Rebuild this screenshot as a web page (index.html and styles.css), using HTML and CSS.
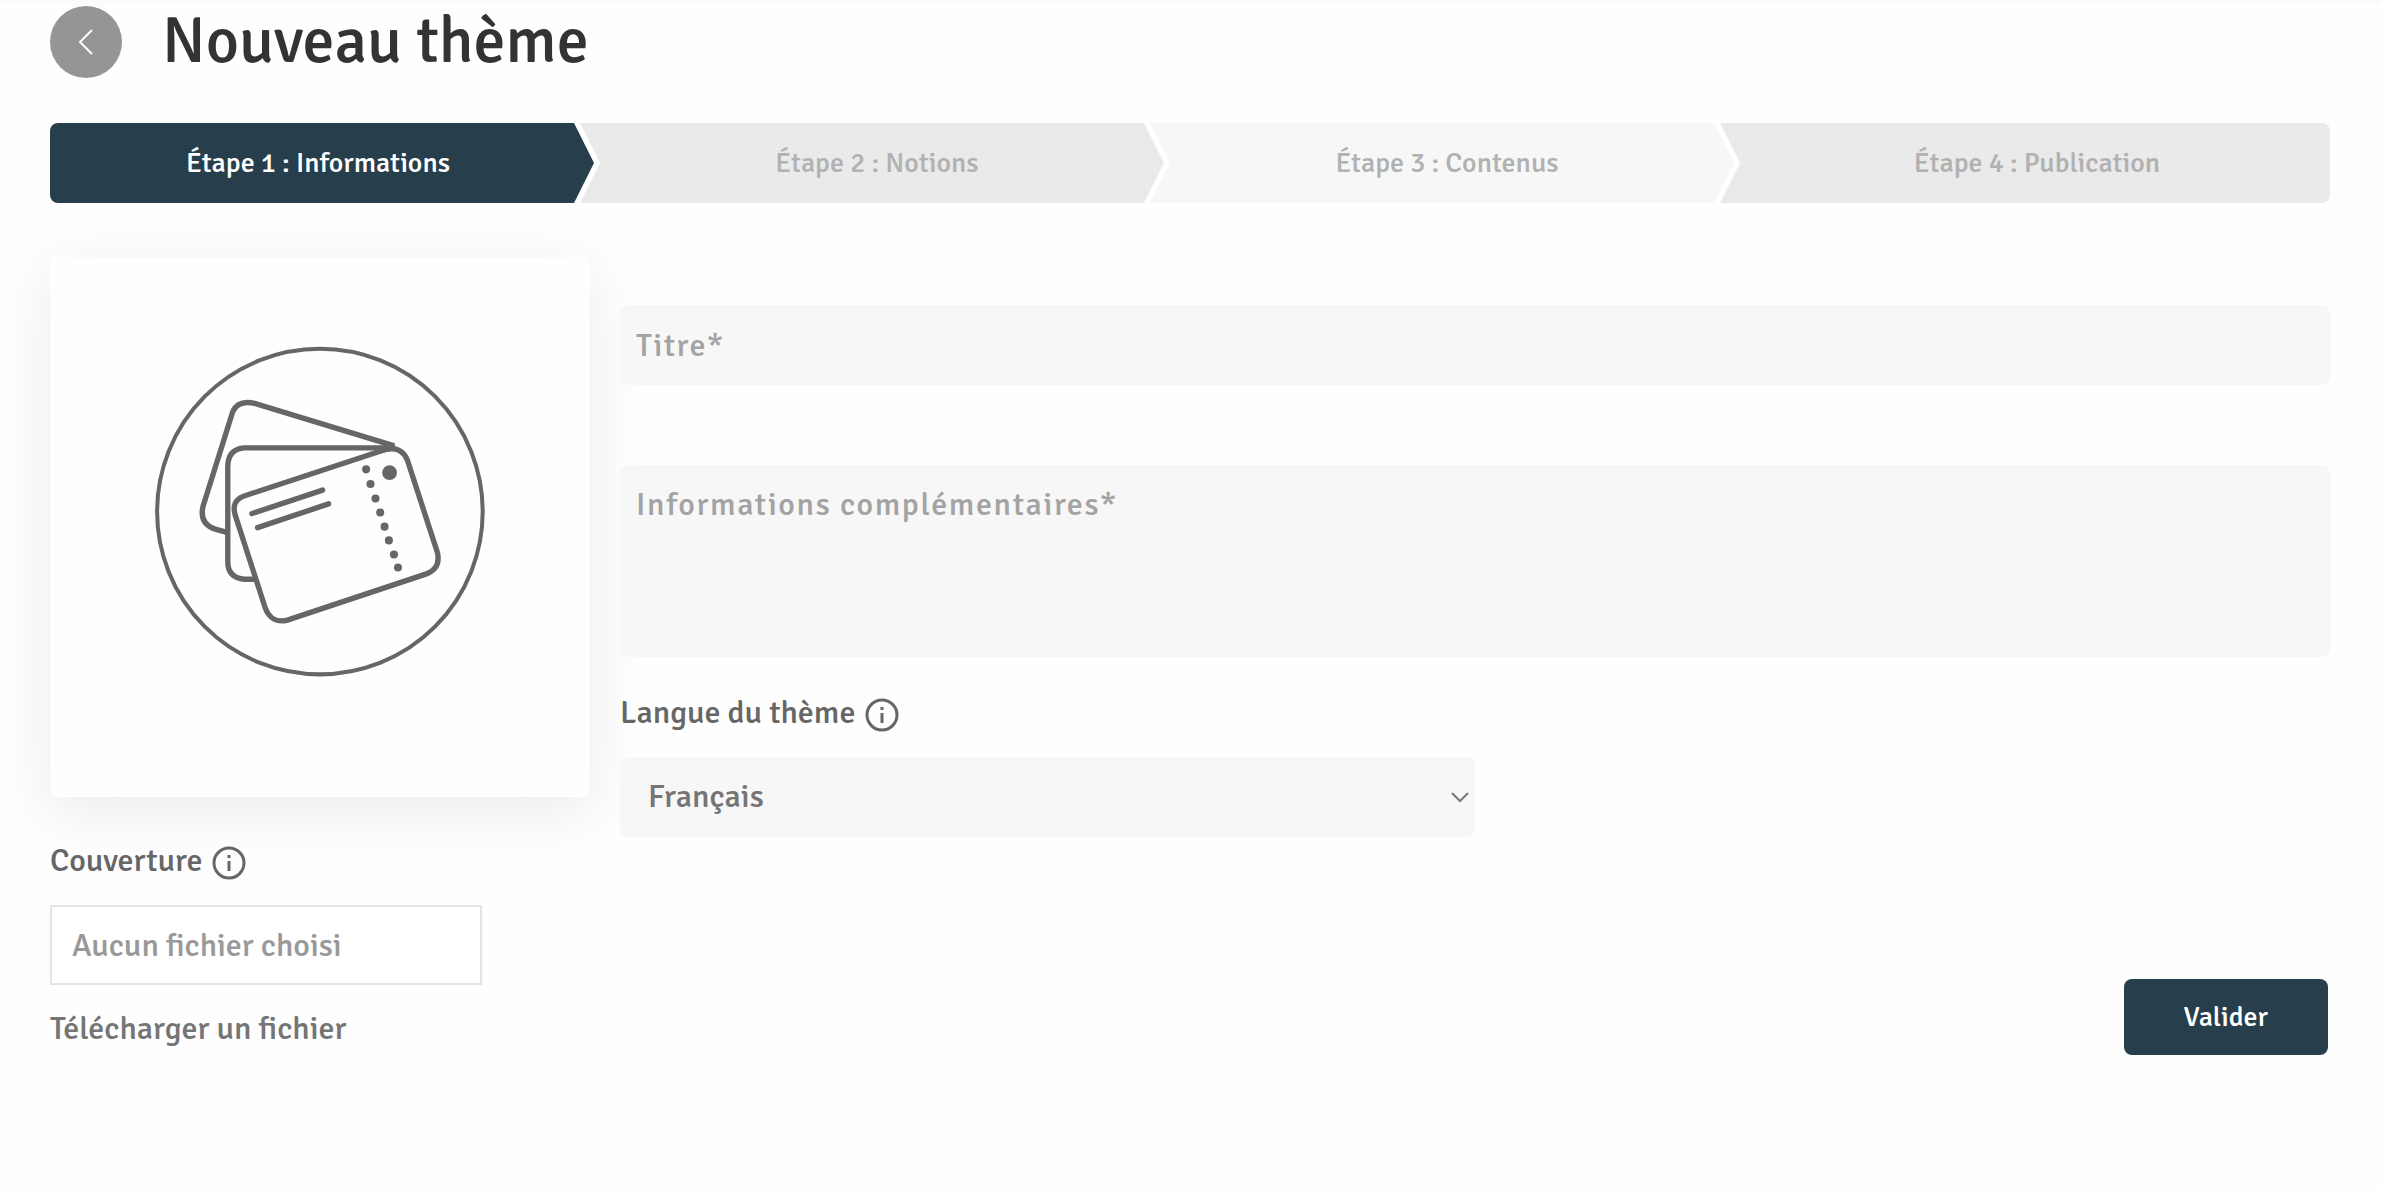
FILE: index.html
```html
<!DOCTYPE html>
<html lang="fr">

<head>
  <meta charset="utf-8">
  <meta name="viewport" content="width=device-width, initial-scale=1">
  <title>Nouveau thème</title>
  <link rel="stylesheet" href="styles.css">
</head>

<body>

  <!-- Header -->
  <header class="page-header">
    <button type="button" class="btn-back" aria-label="Retour">
      <svg width="16" height="26" viewBox="0 0 16 26" fill="none" stroke="#fff" stroke-width="2">
        <path d="M14 1 L2 13 L14 25" />
      </svg>
    </button>
    <h1 class="page-title">Nouveau thème</h1>
  </header>

  <!-- Steps -->
  <ol class="steps">
    <li class="step step-active">Étape 1 : Informations</li>
    <li class="step">Étape 2 : Notions</li>
    <li class="step step-light">Étape 3 : Contenus</li>
    <li class="step">Étape 4 : Publication</li>
  </ol>

  <form class="theme-form">

    <!-- Cover -->
    <div class="cover-col">
      <div class="cover-card">
        <svg class="cover-img" viewBox="0 0 1080 1080" fill="none" stroke="#666" stroke-width="16">
          <circle cx="540" cy="542" r="486" stroke-width="12" />
          <path d="M262 604 L223 593 Q180 575 191 527 L280 243 Q297 208 345 219 L762 346" />
          <path d="M350 744 H315 Q265 740 265 692 V405 Q267 355 315 352 H765" />
          <path d="M318 494 L722 361 C765 345 790 360 801 388 L891 665 C898 698 885 718 858 728 L443 866 C412 874 388 860 377 830 L287 552 C278 520 290 503 318 494 Z" />
          <path d="M337 548 L548 478 M354 590 L566 519" stroke-linecap="round" />
          <g fill="#666" stroke="none">
            <circle cx="748" cy="426" r="22" />
            <circle cx="678" cy="416" r="12" />
            <circle cx="691" cy="460" r="12" />
            <circle cx="706" cy="503" r="12" />
            <circle cx="720" cy="545" r="12" />
            <circle cx="733" cy="587" r="12" />
            <circle cx="746" cy="628" r="12" />
            <circle cx="761" cy="670" r="12" />
            <circle cx="773" cy="709" r="12" />
          </g>
        </svg>
      </div>
      <div class="label-row">
        <label for="couverture">Couverture</label>
        <svg class="info-icon" viewBox="0 0 34 34" fill="none" stroke="#666" stroke-width="3">
          <circle cx="17" cy="17" r="15" />
          <path d="M17 15 V25 M17 9 V12" />
        </svg>
      </div>
      <input type="text" id="couverture" class="file-name" placeholder="Aucun fichier choisi" readonly>
      <a href="#" class="upload-link">Télécharger un fichier</a>
    </div>

    <!-- Fields -->
    <div class="fields-col">
      <input type="text" class="field field-title" placeholder="Titre*" aria-label="Titre">
      <textarea class="field field-infos" placeholder="Informations complémentaires*"
        aria-label="Informations complémentaires"></textarea>
      <div class="label-row">
        <label for="langue">Langue du thème</label>
        <svg class="info-icon" viewBox="0 0 34 34" fill="none" stroke="#666" stroke-width="3">
          <circle cx="17" cy="17" r="15" />
          <path d="M17 15 V25 M17 9 V12" />
        </svg>
      </div>
      <div class="select-wrap">
        <select id="langue" class="field-select">
          <option>Français</option>
        </select>
        <svg class="select-arrow" viewBox="0 0 18 11" fill="none" stroke="#777" stroke-width="2">
          <path d="M1 1 L9 9 L17 1" />
        </svg>
      </div>
      <button type="submit" class="btn-submit">Valider</button>
    </div>

  </form>

</body>

</html>
```

FILE: styles.css
```css
* {
  box-sizing: border-box;
}

body {
  margin: 0;
  padding: 6px 52px 0 50px;
  background-color: #fefefe;
  box-shadow: inset 0 8px 8px -8px rgba(0, 0, 0, 0.04);
  color: #666;
  font-family: "Signika Negative", Lato, "Open Sans", sans-serif;
  font-size: 32px;
  font-weight: 500;
  line-height: 40px;
}

input,
textarea,
select,
button {
  font: inherit;
}

/* Header */
.page-header {
  display: flex;
  align-items: center;
  gap: 40px;
  height: 72px;
}

.btn-back {
  display: flex;
  align-items: center;
  justify-content: center;
  width: 72px;
  height: 72px;
  padding: 0;
  border: none;
  border-radius: 50%;
  background-color: #979497;
}

.page-title {
  margin: 0;
  color: #333;
  font-size: 64px;
  font-weight: 500;
  line-height: 72px;
}

/* Steps */
.steps {
  display: grid;
  grid-template-columns: 530fr 570fr 570fr 610fr;
  margin: 45px 0 54px;
  padding: 0;
  overflow: hidden;
  border-radius: 8px;
  list-style: none;
}

.step {
  position: relative;
  padding: 20px 0 20px 24px;
  background-color: #eaeaea;
  color: #b1b1b1;
  font-size: 28px;
  text-align: center;
}

.step-active {
  padding-left: 6px;
  background-color: #273e4c;
  color: #fff;
}

.step-light {
  background-color: #f7f7f7;
}

.step:nth-child(1) {
  z-index: 3;
}

.step:nth-child(2) {
  z-index: 2;
}

.step:nth-child(3) {
  z-index: 1;
}

/* White chevron, then the arrow head over it */
.step:not(:last-child)::before,
.step:not(:last-child)::after {
  content: "";
  position: absolute;
  top: 0;
  left: calc(100% - 6px);
  height: 100%;
}

.step:not(:last-child)::before {
  width: 26px;
  background-color: #fff;
  clip-path: polygon(0 0, 6px 0, 100% 50%, 6px 100%, 0 100%);
}

.step:not(:last-child)::after {
  width: 20px;
  background-color: inherit;
  clip-path: polygon(0 0, 100% 50%, 0 100%);
}

/* Form */
.theme-form {
  display: grid;
  grid-template-columns: 1fr 3fr;
}

.cover-col {
  display: flex;
  flex-direction: column;
  align-items: flex-start;
  padding-right: 30px;
}

.cover-card {
  display: flex;
  justify-content: center;
  align-items: flex-start;
  width: 100%;
  aspect-ratio: 1;
  padding-top: 73px;
  border-radius: 8px;
  background-color: #fefefe;
  box-shadow: 0 14px 60px rgba(0, 0, 0, 0.08);
}

.cover-img {
  width: 67%;
}

.label-row {
  display: flex;
  align-items: center;
  gap: 10px;
}

.info-icon {
  width: 34px;
  height: 34px;
  margin-top: 4px;
}

.cover-col .label-row {
  margin: 44px 0 24px;
}

.file-name {
  width: 80%;
  height: 80px;
  padding: 0 20px;
  border: 2px solid #e4e4e4;
  background-color: #fff;
}

.file-name::placeholder {
  color: #999;
  opacity: 1;
}

.upload-link {
  margin-top: 24px;
  color: #757575;
  text-decoration: none;
}

.fields-col {
  display: flex;
  flex-direction: column;
  align-items: flex-start;
  padding-top: 48px;
}

.field {
  width: 100%;
  padding: 20px 16px;
  border: none;
  border-radius: 8px;
  background-color: #f7f7f7;
  letter-spacing: 0.05em;
}

.field::placeholder {
  color: #a3a3a3;
  opacity: 1;
}

.field-title {
  height: 80px;
}

.field-infos {
  height: 192px;
  margin-top: 80px;
  resize: none;
}

.fields-col .label-row {
  margin: 36px 0 24px;
}

.select-wrap {
  position: relative;
  width: 50%;
}

.field-select {
  display: block;
  width: 100%;
  height: 80px;
  padding: 0 28px;
  border: none;
  border-radius: 8px;
  background-color: #f7f7f7;
  color: #757575;
  appearance: none;
}

.select-arrow {
  position: absolute;
  top: 35px;
  right: 6px;
  width: 18px;
}

.btn-submit {
  align-self: flex-end;
  margin: 142px 2px 0 0;
  padding: 18px 60px;
  border: none;
  border-radius: 8px;
  background-color: #273e4c;
  color: #fff;
  font-size: 28px;
}
```
